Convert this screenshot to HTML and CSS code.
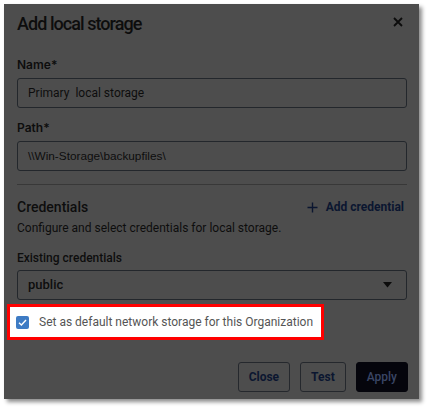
FILE: index.html
```html
<!DOCTYPE html>
<html lang="en">
<head>
<meta charset="utf-8">
<title>Add local storage</title>
<link rel="stylesheet" href="styles.css">
</head>
<body>
<div class="dialog">
  <header class="head">
    <h1 class="title">Add local storage</h1>
    <button class="close" aria-label="Close">
      <svg width="10" height="10" viewBox="0 0 10 10"><path d="M1 1 L9 9 M9 1 L1 9" stroke="#0c0c0c" stroke-width="1.8" fill="none"/></svg>
    </button>
  </header>

  <div class="field">
    <label class="label">Name*</label>
    <div class="input name-text">Primary&nbsp; local storage</div>
  </div>

  <div class="field">
    <label class="label">Path*</label>
    <div class="input path-text">\\Win-Storage\backupfiles\</div>
  </div>

  <div class="divider"></div>

  <div class="cred-head">
    <h2 class="cred-title">Credentials</h2>
    <a class="add-link">
      <svg width="11" height="11" viewBox="0 0 11 11"><path d="M5.5 0.5 V10.5 M0.5 5.5 H10.5" stroke="#0b1630" stroke-width="1.4" fill="none"/></svg>
      <span>Add credential</span>
    </a>
  </div>
  <p class="desc">Configure and select credentials for local storage.</p>

  <div class="field field-cred">
    <label class="label2">Existing credentials</label>
    <div class="input select">
      <span class="select-text">public</span>
      <svg class="caret" width="9" height="6" viewBox="0 0 9 6"><path d="M0 0 H9 L4.5 5.5 Z" fill="#0c0c0c"/></svg>
    </div>
  </div>

  <div class="highlight">
    <span class="cb">
      <svg width="13" height="13" viewBox="0 0 13 13"><path d="M3 6.8 L5.4 9 L10 4" stroke="#fff" stroke-width="1.4" fill="none"/></svg>
    </span>
    <span class="cb-label">Set as default network storage for this Organization</span>
  </div>

  <footer class="foot">
    <button class="btn">Close</button>
    <button class="btn">Test</button>
    <button class="btn primary">Apply</button>
  </footer>
</div>
</body>
</html>
```

FILE: styles.css
```css
html, body {
  margin: 0;
  padding: 0;
  background: #ffffff;
}
body {
  font-family: "Roboto", "Liberation Sans", sans-serif;
  width: 428px;
  height: 410px;
  overflow: hidden;
}
.dialog {
  margin: 4px 0 0 4px;
  width: 415px;
  height: 395px;
  box-sizing: border-box;
  background: #4d4d4d;
  box-shadow: 3px 3px 4px rgba(0, 0, 0, 0.45);
  padding: 8px 12px 0 13px;
  display: flex;
  flex-direction: column;
}
.head {
  display: flex;
  justify-content: space-between;
  align-items: flex-start;
}
.title {
  margin: 0;
  font-family: "Roboto", sans-serif;
  font-weight: 500;
  font-size: 18px;
  line-height: 24px;
  color: #0d0d0d;
  letter-spacing: -0.95px;
}
.close {
  border: 0;
  background: none;
  padding: 0;
  margin: 5px 4px 0 0;
  width: 10px;
  height: 10px;
  display: flex;
}
.field {
  display: flex;
  flex-direction: column;
  gap: 5px;
  margin-top: 21px;
}
.field + .field {
  margin-top: 12px;
}
.label {
  font-family: "Inter", sans-serif;
  font-weight: 600;
  font-size: 12px;
  line-height: 16px;
  color: #0d0d0d;
}
.input {
  height: 30px;
  box-sizing: border-box;
  border: 1px solid #23272c;
  border-radius: 3px;
  padding: 0 10px;
  line-height: 28px;
  color: #0d0d0d;
}
.name-text {
  font-family: "Roboto", sans-serif;
  font-size: 12px;
}
.path-text {
  font-family: "Liberation Sans", sans-serif;
  font-size: 11.8px;
}
.divider {
  height: 1px;
  background: #383838;
  margin-top: 13px;
}
.cred-head {
  display: flex;
  justify-content: space-between;
  align-items: center;
  margin-top: 13px;
  height: 18px;
}
.cred-title {
  margin: 0;
  font-size: 14px;
  font-weight: 500;
  line-height: 18px;
  color: #0d0d0d;
}
.add-link {
  display: flex;
  align-items: center;
  gap: 8px;
  margin-right: 3px;
  font-family: "Roboto", sans-serif;
  font-weight: 700;
  font-size: 12px;
  color: #0b1630;
}
.desc {
  margin: 4px 0 0;
  font-size: 12px;
  line-height: 16px;
  color: #0d0d0d;
}
.field-cred {
  margin-top: 14px;
  gap: 4px;
}
.label2 {
  font-size: 12px;
  font-weight: 500;
  line-height: 16px;
  color: #0d0d0d;
}
.select {
  display: flex;
  justify-content: space-between;
  align-items: center;
}
.select-text {
  font-size: 13px;
  font-weight: 500;
}
.caret {
  margin-right: 4px;
}
.highlight {
  margin: 4px 0 0 -10px;
  width: 317px;
  height: 36px;
  box-sizing: border-box;
  border: 3px solid #ff0000;
  background: #ffffff;
  display: flex;
  align-items: center;
  padding-left: 6px;
  gap: 10px;
}
.cb {
  width: 13px;
  height: 13px;
  border-radius: 2px;
  background: #3d7bc4;
  display: flex;
}
.cb-label {
  font-size: 12px;
  color: #555555;
}
.foot {
  display: flex;
  justify-content: flex-end;
  gap: 10px;
  margin-top: 22px;
  margin-right: -1px;
}
.btn {
  height: 30px;
  box-sizing: border-box;
  border: 1px solid #25282d;
  border-radius: 3px;
  background: transparent;
  padding: 0 10px;
  font-family: "Roboto", sans-serif;
  font-weight: 700;
  font-size: 12px;
  color: #0b1630;
}
.primary {
  background: #05050c;
  border-color: #05050c;
  color: #3a4666;
  font-weight: 500;
  padding: 0 10px;
}
```
